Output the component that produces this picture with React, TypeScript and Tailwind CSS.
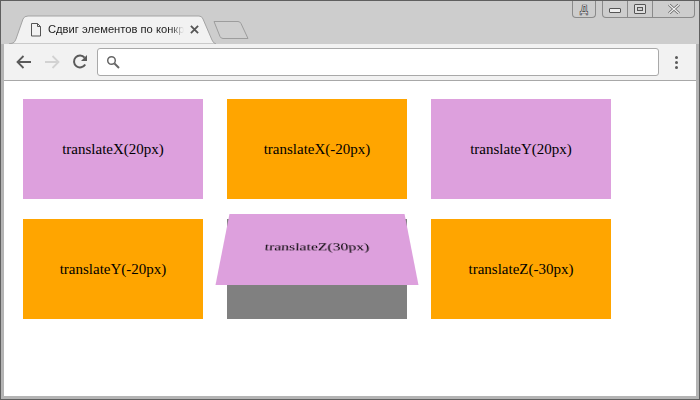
const boxes = [
  { label: "translateX(20px)", bg: "bg-[#dda0dd]" },
  { label: "translateX(-20px)", bg: "bg-[#ffa500]" },
  { label: "translateY(20px)", bg: "bg-[#dda0dd]" },
  { label: "translateY(-20px)", bg: "bg-[#ffa500]" },
  { label: "translateZ(30px)", bg: "bg-[#808080]", moved: true },
  { label: "translateZ(-30px)", bg: "bg-[#ffa500]" },
];

const App = () => {
  return (
    <div className="flex h-[400px] w-[700px] flex-col overflow-hidden border border-[#5f5f5f] bg-[#cdcdcd] font-['Open_Sans',sans-serif]">
      {/* Title bar */}
      <div className="flex h-[43px] shrink-0 items-start justify-between">
        <div className="flex items-end pl-[8px] pt-[14px]">
          {/* Active tab */}
          <div className="relative flex h-[29px] w-[207px] items-center pl-[21px]">
            <svg className="absolute left-0 top-0" width="207" height="29" viewBox="0 0 207 29">
              <path d="M0 29 L4 28 Q6 27 7 24 L14 4 Q15 1 19 1 L190 1 Q193 1 194 4 L203 25 Q204 28 207 29 Z" fill="#f2f2f2" stroke="#a3a3a3" />
            </svg>
            <svg className="relative" width="12" height="14" viewBox="0 0 12 14" fill="none" stroke="#555" strokeWidth="1">
              <path d="M1.5 .5 H7.5 L10.5 3.5 V13 H1.5 Z M7.5 .5 V3.5 H10.5" />
            </svg>
            <span className="relative ml-[6px] w-[136px] overflow-hidden whitespace-nowrap font-['Liberation_Sans',sans-serif] text-[11.2px] text-[#222] [mask-image:linear-gradient(to_right,black_90%,transparent)]">
              Сдвиг элементов по конкр
            </span>
            <svg className="relative ml-[6px]" width="9" height="9" viewBox="0 0 10 10" stroke="#555" strokeWidth="2">
              <path d="M1 1 L9 9 M9 1 L1 9" />
            </svg>
          </div>
          {/* New tab */}
          <svg className="-ml-[3px] mb-[4px]" width="36" height="20" viewBox="0 0 36 20">
            <path d="M1 1.5 H25 Q27 1.5 28 3.5 L35 18.5 H10 Q8 18.5 7 16.5 Z" fill="#cfcfcf" stroke="#9d9d9d" />
          </svg>
        </div>
        {/* Window controls */}
        <div className="mr-[4px] flex items-start">
          <div className="mr-[6px] flex h-[17px] w-[24px] items-center justify-center rounded-b-[4px] border border-t-0 border-[#8a8a8a] font-['Liberation_Sans',sans-serif] text-[11px] font-bold leading-none text-white [-webkit-text-stroke:0.7px_#444]">
            Д
          </div>
          <div className="flex h-[17px] w-[93px] rounded-b-[4px] border border-t-0 border-[#8a8a8a]">
            <div className="flex w-[25px] items-center justify-center border-r border-[#8a8a8a]">
              <div className="mt-[3px] h-[5px] w-[12px] rounded-[1px] border border-[#555] bg-[#eee]" />
            </div>
            <div className="flex w-[25px] items-center justify-center border-r border-[#8a8a8a]">
              <div className="flex h-[10px] w-[12px] items-center justify-center rounded-[1px] border border-[#555] bg-[#ddd]">
                <div className="h-[4px] w-[6px] border border-[#555] bg-[#cdcdcd]" />
              </div>
            </div>
            <div className="flex flex-1 items-center justify-center">
              <svg width="12" height="10" viewBox="0 0 12 10" fill="none">
                <path d="M1 .5 L11 9.5 M11 .5 L1 9.5" stroke="#666" strokeWidth="2.8" />
                <path d="M1 .5 L11 9.5 M11 .5 L1 9.5" stroke="#f2f2f2" strokeWidth="1.2" />
              </svg>
            </div>
          </div>
        </div>
      </div>

      <div className="flex min-h-0 flex-1 flex-col border-[3px] border-t-0 border-[#b4b4b4]">
        {/* Toolbar */}
        <div className="flex h-[37px] shrink-0 items-center border-b border-[#a8a8a8] bg-[#f2f2f2]">
          <div className="ml-[12px] flex items-center gap-[12px]">
            <svg width="16" height="14" viewBox="0 0 16 14" fill="none" stroke="#5a5a5a" strokeWidth="1.8">
              <path d="M15 7 H2 M7.5 1 L1.5 7 L7.5 13" />
            </svg>
            <svg width="16" height="14" viewBox="0 0 16 14" fill="none" stroke="#d2d2d2" strokeWidth="1.8">
              <path d="M1 7 H14 M8.5 1 L14.5 7 L8.5 13" />
            </svg>
            <svg width="16" height="16" viewBox="0 0 16 16" fill="none" stroke="#5a5a5a" strokeWidth="2">
              <path d="M13.2 10.5 A6 6 0 1 1 12.6 3.6" />
              <path d="M15 1 V7 H9 Z" fill="#5a5a5a" stroke="none" />
            </svg>
          </div>
          <div className="ml-[9px] flex h-[28px] w-[562px] items-center rounded-[3px] border border-[#a9a9a9] bg-white pl-[8px]">
            <svg width="14" height="14" viewBox="0 0 14 14" fill="none" stroke="#666" strokeWidth="1.5">
              <circle cx="5.5" cy="5.5" r="3.8" />
              <path d="M8.5 8.5 L13 13" strokeWidth="2" />
            </svg>
          </div>
          <div className="ml-[16px] flex flex-col gap-[2px]">
            <div className="h-[3px] w-[3px] rounded-full bg-[#5a5a5a]" />
            <div className="h-[3px] w-[3px] rounded-full bg-[#5a5a5a]" />
            <div className="h-[3px] w-[3px] rounded-full bg-[#5a5a5a]" />
          </div>
        </div>

        {/* Page */}
        <div className="grid flex-1 grid-cols-[180px_180px_180px] content-start gap-x-[24px] gap-y-[20px] bg-white pl-[19px] pt-[18px] font-['Liberation_Serif',serif] text-[15px] text-black">
          {boxes.map((box) =>
            box.moved ? (
              <div key={box.label} className={`relative h-[100px] ${box.bg}`}>
                <div className="absolute inset-0 flex items-center justify-center bg-[#dda0dd] [transform:perspective(500px)_rotateX(45deg)_translateZ(30px)]">
                  {box.label}
                </div>
              </div>
            ) : (
              <div key={box.label} className={`flex h-[100px] items-center justify-center ${box.bg}`}>
                {box.label}
              </div>
            ),
          )}
        </div>
      </div>
    </div>
  );
};

export default App;
